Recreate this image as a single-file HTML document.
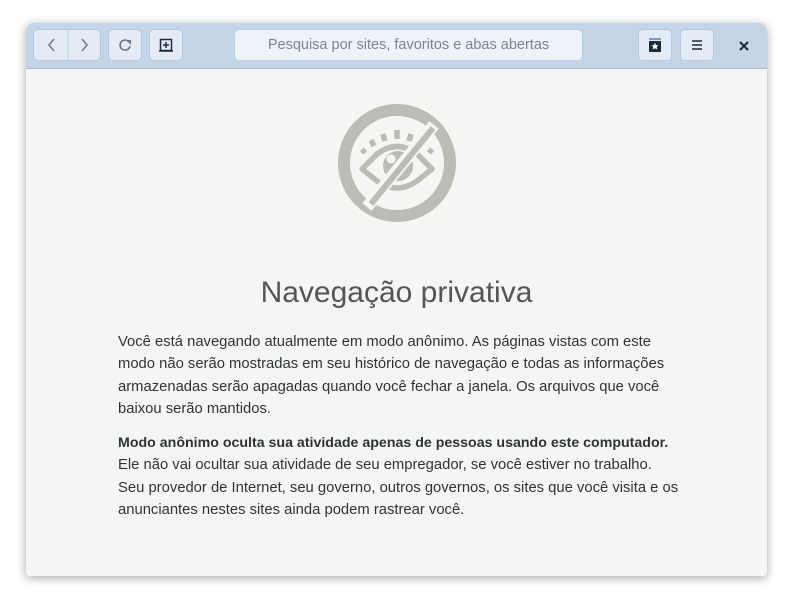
<!DOCTYPE html>
<html><head><meta charset="utf-8"><style>
*{margin:0;padding:0;box-sizing:border-box}
body{width:793px;height:605px;background:#fff;font-family:"Liberation Sans",sans-serif;position:relative;overflow:hidden}
.win{position:absolute;left:26px;top:23px;width:741px;height:553px;border-radius:8px 8px 4px 4px;background:#f6f5f4;box-shadow:0 2px 10px rgba(0,0,0,.35);overflow:hidden}
.hb{position:absolute;left:0;top:0;width:741px;height:46px;background:#c4d5e8;border-bottom:1px solid #a8bcd4}
.btn{position:absolute;top:6px;height:32px;background:#e3ecf6;border:1px solid #b6c8de;border-radius:5px;display:flex;align-items:center;justify-content:center;color:#6a7585;font-size:16px}
.url{position:absolute;left:208px;top:6px;width:349px;height:32px;background:#eef3f9;border:1px solid #bccde0;border-radius:5px;color:#7b8591;font-size:14.5px;line-height:30px;text-align:center}
h1{position:absolute;left:0;width:741px;top:253px;text-align:center;font-weight:normal;font-size:30px;color:#555;letter-spacing:0}
p{position:absolute;left:92px;width:640px;font-size:14.8px;line-height:22.3px;color:#2e3436;white-space:nowrap}
b{font-size:14.2px}
</style></head><body>
<div class="win">
<div class="hb">
 <div class="btn" style="left:7px;width:68px;padding:0">
  <svg width="68" height="30"><path d="M20 9l-5 6 5 6" fill="none" stroke="#6a7585" stroke-width="1.5"/><line x1="34" y1="0" x2="34" y2="30" stroke="#b6c8de"/><path d="M48 9l5 6-5 6" fill="none" stroke="#6a7585" stroke-width="1.5"/></svg>
 </div>
 <div class="btn" style="left:82px;width:34px"><svg width="16" height="16"><path d="M12 5A5 5 0 1 0 13 9" fill="none" stroke="#6a7585" stroke-width="1.6"/><path d="M9 3h5v5z" fill="#6a7585"/></svg></div>
 <div class="btn" style="left:123px;width:34px"><svg width="16" height="16"><rect x="2.5" y="2.5" width="11" height="11" fill="none" stroke="#1d2a3c" stroke-width="1.5"/><path d="M8 5v6M5 8h6" stroke="#1d2a3c" stroke-width="1.5"/><line x1="1" y1="14" x2="15" y2="14" stroke="#1d2a3c" stroke-width="1.5"/></svg></div>
 <div class="url">Pesquisa por sites, favoritos e abas abertas</div>
 <div class="btn" style="left:612px;width:34px"><svg width="16" height="16"><rect x="2" y="1" width="12" height="2" fill="#8a98ab"/><rect x="2" y="4" width="12" height="11" fill="#1d2a3c"/><path d="M8 5.8l1.1 2.3 2.4.3-1.8 1.6.5 2.4L8 11.2l-2.2 1.2.5-2.4-1.8-1.6 2.4-.3z" fill="#fff"/></svg></div>
 <div class="btn" style="left:654px;width:34px"><svg width="14" height="14"><path d="M2 3h10M2 7h10M2 11h10" stroke="#1d2a3c" stroke-width="1.5"/></svg></div>
 <svg style="position:absolute;left:712px;top:17px" width="12" height="12"><path d="M2 2l8 8M10 2l-8 8" stroke="#1d2a3c" stroke-width="2"/></svg>
</div>
<svg style="position:absolute;left:311px;top:80px" width="120" height="120" viewBox="0 0 120 120">
 <circle cx="60" cy="60" r="53" fill="none" stroke="#babdb6" stroke-width="12"/>
 <g fill="none" stroke="#babdb6" stroke-width="5.5" stroke-linejoin="round">
  <path d="M25 66L40 51Q60 36 80 51L95 66L80 78Q60 92 40 78Z"/>
  <path d="M28 50l-3-4M37 43l-3-6M48 38l-2-7M60 36v-9M72 38l2-7M83 43l3-6M92 50l3-4"/>
 </g>
 <circle cx="61" cy="63" r="15" fill="#babdb6"/>
 <circle cx="54" cy="56" r="4.5" fill="#f6f5f4"/>
 <line x1="97" y1="22" x2="30" y2="104" stroke="#f6f5f4" stroke-width="12"/>
 <line x1="96" y1="25" x2="34" y2="101" stroke="#babdb6" stroke-width="6"/>
</svg>
<h1>Navegação privativa</h1>
<p style="top:308px">Você está navegando atualmente em modo anônimo. As páginas vistas com este<br>modo não serão mostradas em seu histórico de navegação e todas as informações<br>armazenadas serão apagadas quando você fechar a janela. Os arquivos que você<br>baixou serão mantidos.</p>
<p style="top:409px"><b>Modo anônimo oculta sua atividade apenas de pessoas usando este computador.</b><br>Ele não vai ocultar sua atividade de seu empregador, se você estiver no trabalho.<br>Seu provedor de Internet, seu governo, outros governos, os sites que você visita e os<br>anunciantes nestes sites ainda podem rastrear você.</p>
</div>
</body></html>
